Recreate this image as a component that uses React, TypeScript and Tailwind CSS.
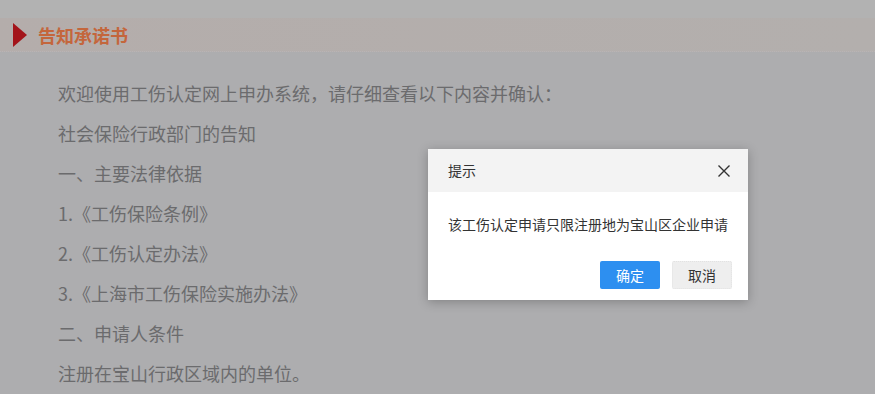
import React from "react";

const lines = [
  "欢迎使用工伤认定网上申办系统，请仔细查看以下内容并确认：",
  "社会保险行政部门的告知",
  "一、主要法律依据",
  "1.《工伤保险条例》",
  "2.《工伤认定办法》",
  "3.《上海市工伤保险实施办法》",
  "二、申请人条件",
  "注册在宝山行政区域内的单位。",
];

const cjk = { fontFamily: '"Microsoft YaHei", "Noto Sans CJK SC", "Noto Sans", sans-serif' };

export default function App() {
  return (
    <div className="relative w-[875px] h-[394px] overflow-hidden bg-[#adadaf]" style={cjk}>
      {/* top strip + title band */}
      <div className="h-[18px] bg-[#b2b2b2]" />
      <div className="h-[34px] bg-gradient-to-r from-[#b4adab] to-[#b3afad] flex items-center border-b border-dotted border-[#b8b4b6]">
        <div className="ml-[13px] w-0 h-0 border-y-[12px] border-y-transparent border-l-[14px] border-l-[#a3141a]" />
        <span className="ml-[11px] text-[18px] font-bold text-[#c4663c] leading-none">告知承诺书</span>
      </div>

      {/* notice text */}
      <div className="pl-[58px] pt-[21px] text-[18px] leading-[40px] text-[#6b6b6d]">
        {lines.map((t, i) => (
          <div key={i}>{t}</div>
        ))}
      </div>

      {/* dialog */}
      <div className="absolute left-[428px] top-[149px] w-[320px] bg-white shadow-[0_2px_10px_rgba(0,0,0,0.25)]">
        <div className="h-[43px] bg-[#f3f3f3] flex items-center justify-between pl-[20px] pr-[16px]">
          <span className="text-[14px] text-[#333]">提示</span>
          <svg width="14" height="14" viewBox="0 0 14 14" className="mr-[1px]">
            <path d="M1.5 1.5 L12.5 12.5 M12.5 1.5 L1.5 12.5" stroke="#333" strokeWidth="1.4" fill="none" />
          </svg>
        </div>
        <div className="pt-[22px] px-[20px] text-[14px] leading-[20px] text-[#333]">
          该工伤认定申请只限注册地为宝山区企业申请
        </div>
        <div className="flex justify-end gap-[12px] pt-[27px] pb-[11px] pr-[16px]">
          <button className="w-[60px] h-[28px] rounded-[2px] bg-[#2d8ff0] text-white text-[14px]">确定</button>
          <button className="w-[60px] h-[28px] rounded-[2px] bg-[#eeeeee] border border-dotted border-[#e2e2e2] text-[#333] text-[14px]">取消</button>
        </div>
      </div>
    </div>
  );
}
